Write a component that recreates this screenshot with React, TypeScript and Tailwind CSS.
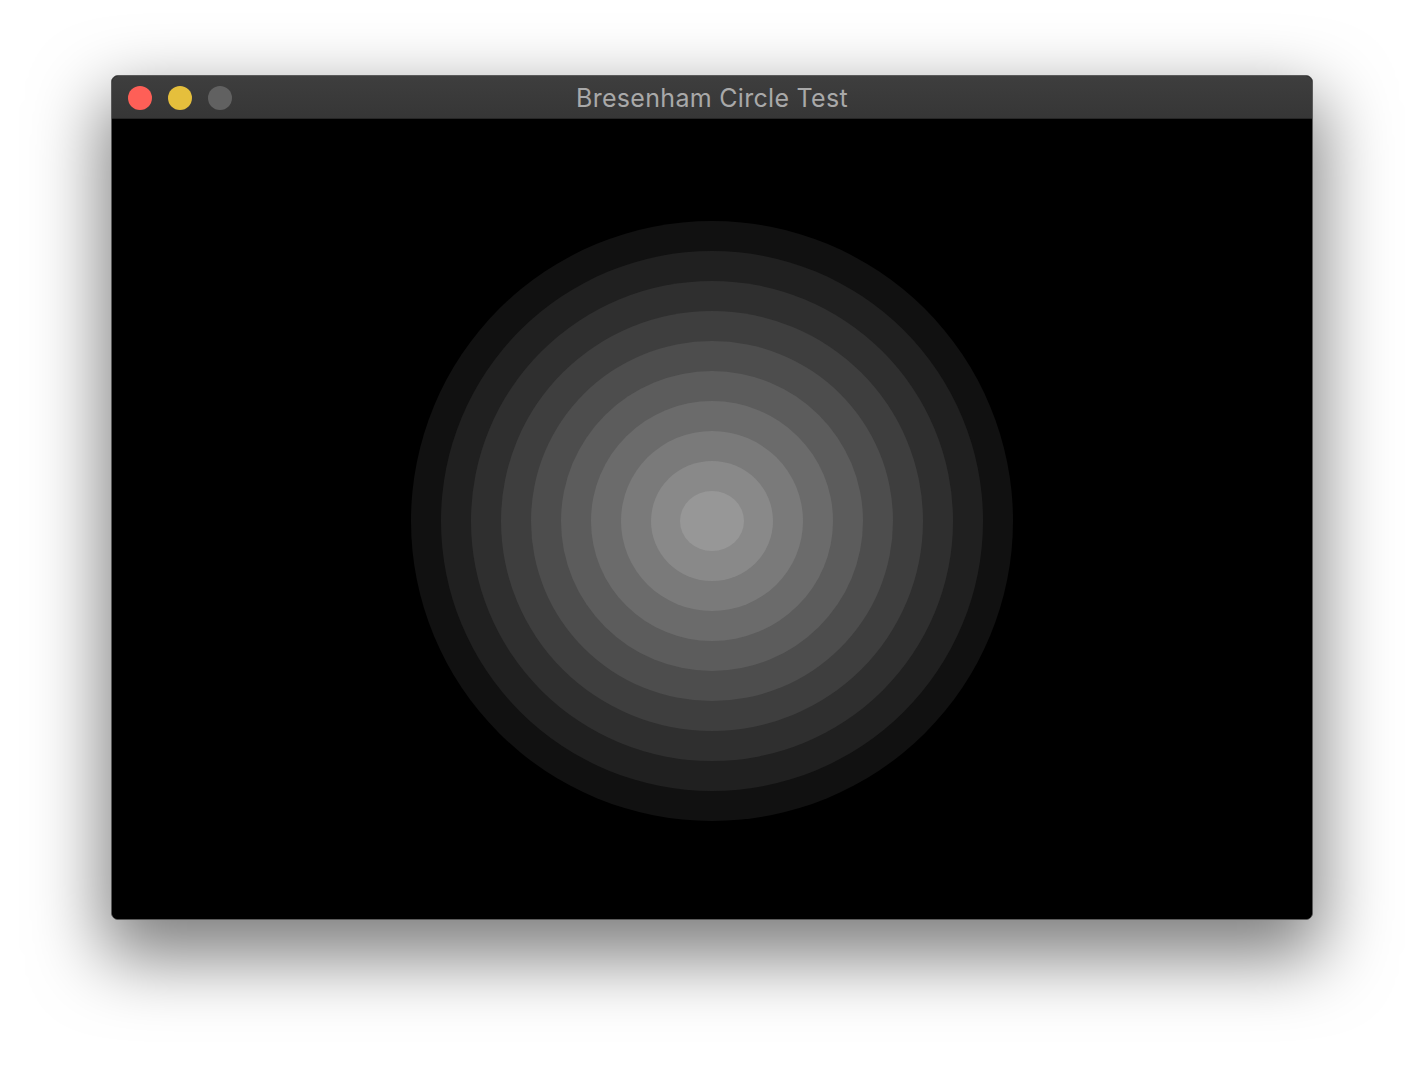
import React from "react";

const grays = [17, 32, 47, 62, 77, 92, 107, 122, 137, 151];

export default function App() {
  return (
    <div className="w-[1424px] h-[1068px] bg-white flex justify-center pt-[75px] overflow-hidden">
      <div className="w-[1202px] h-[845px] rounded-[7px] border border-[#5a5a5a] bg-black overflow-hidden shadow-[0_30px_70px_8px_rgba(0,0,0,0.5)] flex flex-col">
        <div className="h-[43px] shrink-0 bg-gradient-to-b from-[#3e3e3e] to-[#363636] border-b border-[#262626] relative flex items-center justify-center">
          <div className="absolute left-[16px] top-[10px] flex gap-[16px]">
            <div className="w-[24px] h-[24px] rounded-full bg-[#fe5f57]" />
            <div className="w-[24px] h-[24px] rounded-full bg-[#e5bf3c]" />
            <div className="w-[24px] h-[24px] rounded-full bg-[#616161]" />
          </div>
          <span
            className="text-[#a9a9a9] text-[25px] tracking-[0.3px] leading-none pt-[3px]"
            style={{ fontFamily: "Inter, 'Open Sans', 'Noto Sans', sans-serif" }}
          >
            Bresenham Circle Test
          </span>
        </div>
        <div className="flex-1 bg-black">
          <svg width="1200" height="800" viewBox="0 0 1200 800" className="block">
            {grays.map((g, i) => (
              <ellipse
                key={i}
                cx={600}
                cy={402}
                rx={301 - i * 30 + (i === 9 ? 1 : 0)}
                ry={300 - i * 30}
                fill={`rgb(${g},${g},${g})`}
              />
            ))}
          </svg>
        </div>
      </div>
    </div>
  );
}
